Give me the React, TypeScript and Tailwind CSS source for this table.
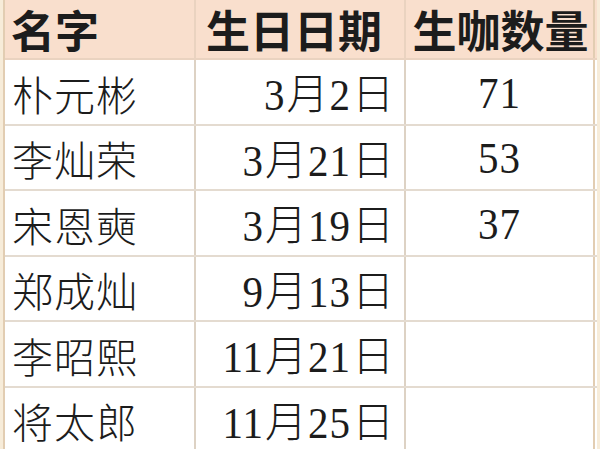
import React from 'react';

interface Row {
  name: string;
  birthday: string;
  count?: string;
}

const rows: Row[] = [
  { name: '朴元彬', birthday: '3月2日', count: '71' },
  { name: '李灿荣', birthday: '3月21日', count: '53' },
  { name: '宋恩奭', birthday: '3月19日', count: '37' },
  { name: '郑成灿', birthday: '9月13日' },
  { name: '李昭熙', birthday: '11月21日' },
  { name: '将太郎', birthday: '11月25日' },
];

const serif = { fontFamily: '"Liberation Serif", "Noto Sans CJK SC", serif' };
const cjk = { fontFamily: '"Noto Sans CJK SC", sans-serif' };

// Splits digits from CJK so the numbers keep a serif look
const Mixed: React.FC<{ text: string }> = ({ text }) => (
  <>
    {text.split(/(\d+)/).filter(Boolean).map((part, i) =>
      /\d/.test(part) ? (
        <span key={i} className="inline-block scale-y-110 tracking-[1px]">{part}</span>
      ) : (
        <span key={i} style={cjk} className="font-light text-[42px] px-[1px]">
          {part}
        </span>
      )
    )}
  </>
);

const cell = 'border-r-2 border-[#ddd2c4] flex items-center';

const App: React.FC = () => {
  return (
    <div className="w-[600px] h-[449px] overflow-hidden bg-[#f7ecd9] flex" style={serif}>
      <div className="w-[3px] shrink-0" />
      <div className="w-[594px] shrink-0 border-l-2 border-[#e2cdb2] bg-white text-[#1c1c1c]">
        <div className="grid grid-cols-[191px_210px_189px] h-[60px] bg-[#f9dfcd] border-b-2 border-[#ead3c0]">
          <div className={`${cell} pl-[6px] border-[#ead3c0]`}>
            <span className="text-[44px] font-bold leading-[1.15]" style={cjk}>名字</span>
          </div>
          <div className={`${cell} justify-center pr-[12px] border-[#ead3c0]`}>
            <span className="text-[44px] font-bold leading-[1.15]" style={cjk}>生日日期</span>
          </div>
          <div className={`${cell} justify-center pl-[2px] border-[#e2cdb2]`}>
            <span className="text-[44px] font-bold leading-[1.15]" style={cjk}>生咖数量</span>
          </div>
        </div>
        {rows.map((r) => (
          <div key={r.name} className="grid grid-cols-[191px_210px_189px] h-[65.5px] border-b-2 border-[#e4dbd0]">
            <div className={`${cell} pl-[7px] pt-[3px]`}>
              <span className="text-[41px] font-light leading-[1.2] tracking-[1px]" style={cjk}>
                {r.name}
              </span>
            </div>
            <div className={`${cell} justify-end pr-[9px] pt-[3px]`}>
              <span className="text-[41px] leading-[1.2]">
                <Mixed text={r.birthday} />
              </span>
            </div>
            <div className={`${cell} justify-center border-[#e2cdb2] pt-[3px]`}>
              <span className="text-[41px] leading-[1.2] inline-block scale-y-110 tracking-[1px]">{r.count ?? ''}</span>
            </div>
          </div>
        ))}
      </div>
    </div>
  );
};

export default App;
